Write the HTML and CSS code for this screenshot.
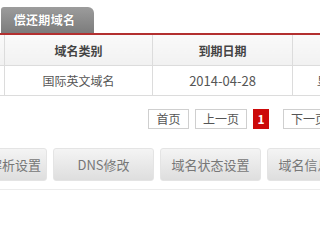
FILE: index.html
```html
<!DOCTYPE html>
<html lang="zh-CN">
<head>
<meta charset="utf-8">
<link rel="stylesheet" href="styles.css">
</head>
<body>
<div class="page">
  <div class="tabs">
    <div class="tab">偿还期域名</div>
  </div>
  <table class="grid">
    <tr class="head">
      <th class="c0">域名</th>
      <th class="c1">域名类别</th>
      <th class="c2">到期日期</th>
      <th class="c3"></th>
    </tr>
    <tr class="row">
      <td class="c0"></td>
      <td class="c1">国际英文域名</td>
      <td class="c2">2014-04-28</td>
      <td class="c3">显示</td>
    </tr>
  </table>
  <div class="pager">
    <span class="pg pg-first">首页</span>
    <span class="pg pg-prev">上一页</span>
    <span class="pg pg-cur">1</span>
    <span class="pg pg-next">下一页</span>
  </div>
  <div class="actions">
    <div class="btn btn-first">解析设置</div>
    <div class="btn">DNS修改</div>
    <div class="btn">域名状态设置</div>
    <div class="btn">域名信息修改</div>
  </div>
  <div class="sep"></div>
</div>
</body>
</html>
```
FILE: styles.css
```css
html, body {
  margin: 0;
  padding: 0;
  background: #fff;
}
body {
  font-family: "Noto Sans CJK SC", "Noto Sans", sans-serif;
  font-size: 12px;
  color: #555;
}
.page {
  width: 320px;
  height: 200px;
  overflow: hidden;
}
.tabs {
  height: 26px;
  padding-top: 7px;
  border-bottom: 2px solid #b33030;
  display: flex;
}
.tab {
  width: 93px;
  height: 26px;
  margin-left: 1px;
  box-sizing: border-box;
  padding-right: 6px;
  background: linear-gradient(#9c9c9c, #7c7c7c);
  border-radius: 3px 6px 0 0;
  color: #fff;
  font-weight: bold;
  font-size: 12px;
  letter-spacing: 0.3px;
  line-height: 26px;
  text-align: center;
  text-shadow: 0 0 1px rgba(0,0,0,0.3);
}
.grid {
  border-collapse: collapse;
  table-layout: fixed;
  margin-left: -96px;
  width: 560px;
}
.grid th, .grid td {
  border: 1px solid #dcdcdc;
  border-top: none;
  text-align: center;
  padding: 0;
  white-space: nowrap;
  overflow: hidden;
}
.c0 { width: 99px; }
.c1 { width: 147px; }
.c2 { width: 139px; }
.c3 { width: 170px; }
.head th {
  height: 30px;
  background: linear-gradient(#fafafa, #f1f1f1);
  color: #444;
  font-weight: bold;
  font-size: 12px;
}
.row td {
  height: 29px;
  background: #fff;
  color: #555;
  font-size: 12px;
}
.row td.c2 {
  font-size: 13px;
}
.row td.c3 {
  text-align: left;
  padding-left: 24px;
}
.pager {
  display: flex;
  margin-top: 13px;
  margin-left: 148px;
  height: 20px;
}
.pg {
  flex: none;
  box-sizing: border-box;
  height: 20px;
  line-height: 18px;
  border: 1px solid #cfcfcf;
  padding: 0;
  color: #555;
  font-size: 12px;
  background: #fff;
  white-space: nowrap;
  text-align: center;
  margin-right: 6px;
}
.pg-first { width: 41px; }
.pg-prev { width: 52px; }
.pg-cur {
  width: 16px;
  background: #cc0a0a;
  border-color: #cc0a0a;
  color: #fff;
  font-weight: bold;
  margin-right: 14px;
}
.pg-next { width: 52px; }
.actions {
  display: flex;
  gap: 6px;
  margin-top: 19px;
  margin-left: -17px;
}
.btn {
  flex: none;
  box-sizing: border-box;
  width: 101px;
  height: 33px;
  line-height: 31px;
  text-align: center;
  border: 1px solid #e4e4e4;
  border-radius: 3px;
  background: linear-gradient(#f4f4f4, #dedede);
  color: #777;
  font-size: 13px;
  white-space: nowrap;
}
.btn-first {
  width: 64px;
}
.sep {
  margin-top: 8px;
  border-top: 1px solid #ececec;
}
```
